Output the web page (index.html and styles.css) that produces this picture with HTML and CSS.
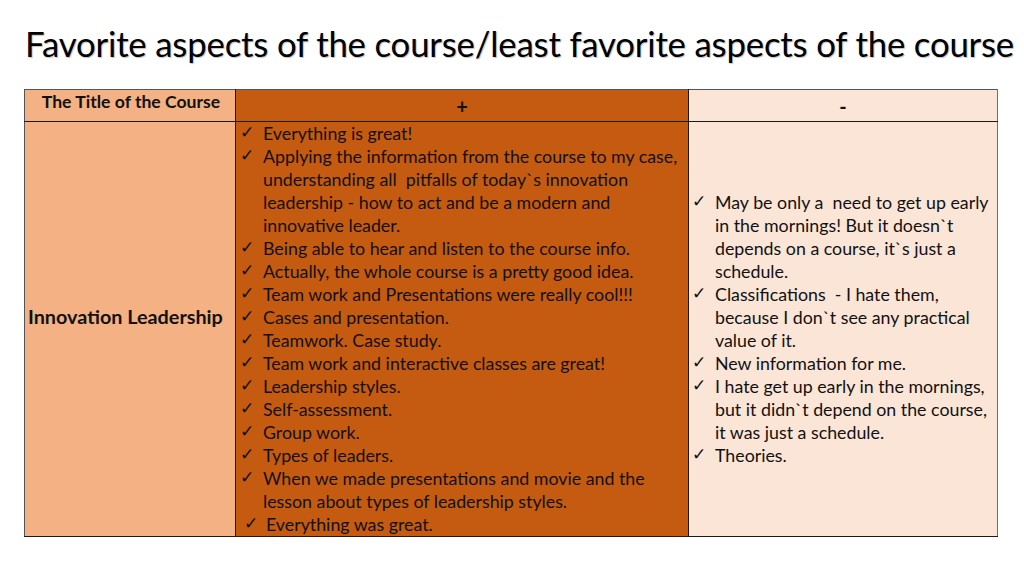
FILE: index.html
```html
<!DOCTYPE html>
<html>
<head>
<meta charset="utf-8">
<link rel="stylesheet" href="styles.css">
</head>
<body>
<div class="slide">
  <h1 class="title">Favorite aspects of the course/least favorite aspects of the course</h1>
  <table class="grid">
    <colgroup>
      <col class="c1"><col class="c2"><col class="c3">
    </colgroup>
    <tr class="head">
      <th class="h-title"><div class="h-title-text">The Title of the Course</div></th>
      <th class="h-plus">+</th>
      <th class="h-minus">-</th>
    </tr>
    <tr class="body">
      <td class="course"><span class="course-name">Innovation Leadership</span></td>
      <td class="plus">
        <ul class="checks">
          <li>Everything is great!</li>
          <li>Applying the information from the course to my case,<br>understanding all&nbsp; pitfalls of today`s innovation<br>leadership - how to act and be a modern and<br>innovative leader.</li>
          <li>Being able to hear and listen to the course info.</li>
          <li>Actually, the whole course is a pretty good idea.</li>
          <li>Team work and Presentations were really cool!!!</li>
          <li>Cases and presentation.</li>
          <li>Teamwork. Case study.</li>
          <li>Team work and interactive classes are great!</li>
          <li>Leadership styles.</li>
          <li>Self-assessment.</li>
          <li>Group work.</li>
          <li>Types of leaders.</li>
          <li>When we made presentations and movie and the<br>lesson about types of leadership styles.</li>
          <li class="shift">Everything was great.</li>
        </ul>
      </td>
      <td class="minus">
        <ul class="checks">
          <li>May be only a&nbsp; need to get up early<br>in the mornings! But it doesn`t<br>depends on a course, it`s just a<br>schedule.</li>
          <li>Classifications&nbsp; - I hate them,<br>because I don`t see any practical<br>value of it.</li>
          <li>New information for me.</li>
          <li>I hate get up early in the mornings,<br>but it didn`t depend on the course,<br>it was just a schedule.</li>
          <li>Theories.</li>
        </ul>
      </td>
    </tr>
  </table>
</div>
</body>
</html>
```

FILE: styles.css
```css
html, body {
  margin: 0;
  padding: 0;
  background: #ffffff;
}
body {
  width: 1024px;
  height: 576px;
  overflow: hidden;
  font-family: Lato, "Open Sans", "Liberation Sans", sans-serif;
  color: #111111;
}
.slide {
  padding: 24px 0 0 24px;
}
.title {
  margin: 0 0 25px 1px;
  font-weight: 400;
  font-size: 34.8px;
  line-height: 40px;
  color: #000000;
  white-space: nowrap;
  letter-spacing: -0.2px;
  text-shadow: 1px 1px 1px rgba(0,0,0,0.25);
}
.grid {
  border-collapse: collapse;
  table-layout: fixed;
  width: 973px;
}
.c1 { width: 211px; }
.c2 { width: 453px; }
.c3 { width: 309px; }
.grid th, .grid td {
  border: 1px solid #1a1a1a;
  padding: 0;
}
.grid .h-title, .grid .course {
  border-left: 1px solid #555555;
}
.grid .h-minus, .grid .minus {
  border-right: 1px solid #707070;
}
.grid .head th {
  border-top: 1px solid #555555;
}
.head th {
  height: 31px;
  font-weight: 700;
}
.h-title {
  background: #F4B183;
  vertical-align: top;
  text-align: center;
}
.h-title-text {
  font-size: 17.6px;
  line-height: 22px;
  margin-top: 1px;
  margin-left: 2px;
  white-space: nowrap;
}
.h-plus {
  background: #C55A11;
  font-size: 20px;
  line-height: 20px;
  vertical-align: middle;
}
.h-minus {
  background: #FBE5D6;
  font-size: 20px;
  line-height: 20px;
  vertical-align: middle;
}
.body td {
  height: 414px;
}
.course {
  background: #F4B183;
  vertical-align: middle;
}
.course-name {
  display: block;
  margin: 0 0 26px 3px;
  font-weight: 700;
  font-size: 19.8px;
  line-height: 24px;
  white-space: nowrap;
}
.plus {
  background: #C55A11;
  vertical-align: top;
}
.minus {
  background: #FBE5D6;
  vertical-align: middle;
}
.checks {
  list-style: none;
  margin: 0;
  padding: 0;
  font-size: 17.8px;
  line-height: 23px;
  white-space: nowrap;
}
.checks li {
  position: relative;
  padding-left: 27px;
}
.checks li::before {
  content: "\2713";
  position: absolute;
  left: 4px;
  top: -1px;
  font-family: "DejaVu Sans", sans-serif;
  font-size: 17px;
  font-weight: 700;
  color: #0d0d0d;
}
.checks li.shift {
  padding-left: 30px;
}
.checks li.shift::before {
  left: 8px;
}
.minus .checks li::before {
  left: 3px;
}
.minus .checks li {
  padding-left: 26px;
}
```
